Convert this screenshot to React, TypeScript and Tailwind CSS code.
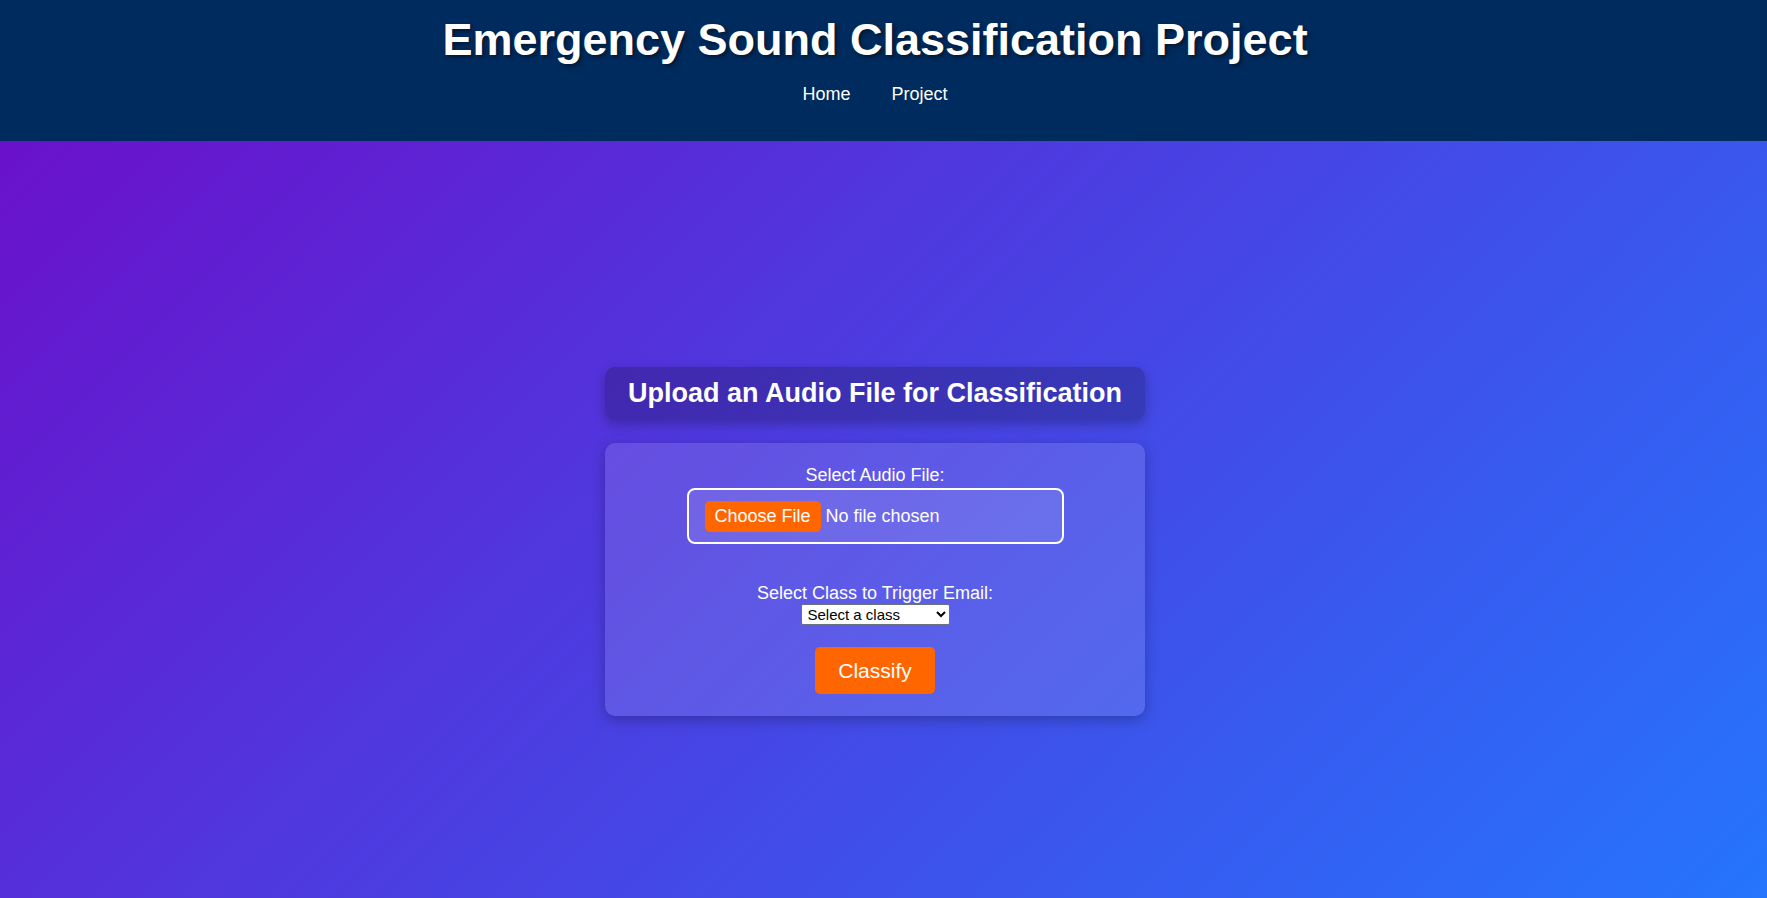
import React from "react";

const classes = ["Ambulance", "Fire Truck", "Police Siren", "Car Horn", "Glass Breaking"];

export default function App() {
  return (
    <div className="min-h-screen flex flex-col font-['Liberation_Sans',Arial,sans-serif] text-white">
      <header className="h-[141px] bg-[#002b5e] flex flex-col items-center pt-[14px] pr-[17px]">
        <h1 className="text-[45px] leading-[52px] font-bold [text-shadow:2px_2px_4px_rgba(0,0,0,0.5)]">
          Emergency Sound Classification Project
        </h1>
        <nav className="mt-[18px] flex gap-[41px] text-[18px] leading-[21px]">
          <a href="#" className="hover:underline">Home</a>
          <a href="#" className="hover:underline">Project</a>
        </nav>
      </header>

      <main className="flex-1 flex flex-col items-center pt-[226px] pb-10 pr-[17px] bg-[linear-gradient(135deg,#6a11cb_0%,#2575fc_100%)]">
        <div className="w-[540px] rounded-[10px] bg-[rgba(0,0,0,0.2)] shadow-[0_4px_12px_rgba(0,0,0,0.25)] py-[11px] text-center">
          <h2 className="text-[27px] leading-[31px] font-bold">Upload an Audio File for Classification</h2>
        </div>

        <form
          className="mt-[23px] w-[540px] rounded-[10px] bg-[rgba(255,255,255,0.12)] shadow-[0_4px_14px_rgba(0,0,0,0.25)] pt-[22px] pb-[22px] flex flex-col items-center text-[18px]"
          onSubmit={(e) => e.preventDefault()}
        >
          <label className="leading-[21px]">Select Audio File:</label>
          <label className="mt-[2px] w-[377px] h-[56px] border-2 border-white rounded-[8px] bg-[rgba(255,255,255,0.1)] flex items-center pl-[16px] cursor-pointer">
            <span className="bg-[#ff6600] rounded-[5px] h-[31px] px-[10px] flex items-center leading-none">Choose File</span>
            <span className="ml-[5px]">No file chosen</span>
            <input type="file" accept="audio/*" className="hidden" />
          </label>

          <label className="mt-[39px] leading-[21px]">Select Class to Trigger Email:</label>
          <select className="w-[149px] h-[21px] bg-white text-black text-[15px] leading-none border border-gray-500 rounded-[2px] px-[2px]">
            <option>Select a class</option>
            {classes.map((c) => (
              <option key={c}>{c}</option>
            ))}
          </select>

          <button
            type="submit"
            className="mt-[22px] h-[47px] px-[23px] bg-[#ff6600] hover:bg-[#e65c00] rounded-[5px] text-[21px]"
          >
            Classify
          </button>
        </form>
      </main>
    </div>
  );
}
